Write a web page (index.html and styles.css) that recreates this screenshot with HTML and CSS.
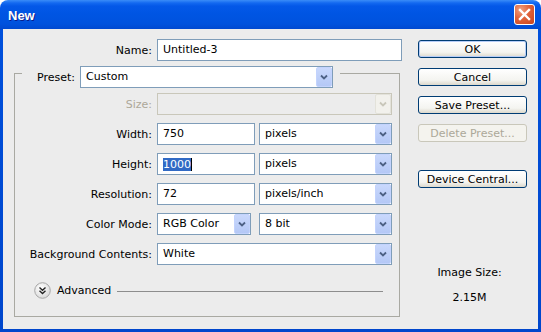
FILE: index.html
```html
<!DOCTYPE html>
<html lang="en">
<head>
  <meta charset="UTF-8" />
  <title>New</title>
  <link rel="stylesheet" href="styles.css">
</head>
<body>
  <div class="window">
    <div class="titlebar">
      <span class="title">New</span>
      <span class="close">
        <svg width="19" height="19" viewBox="0 0 19 19"><path d="M5 5 L14 14 M14 5 L5 14" stroke="#fff" stroke-width="2.4" stroke-linecap="square"/></svg>
      </span>
    </div>

    <div class="client">
      <div class="form">
        <div class="row name-row">
          <label>Name:</label>
          <div class="field">Untitled-3</div>
        </div>

        <div class="group">
          <div class="group-head">
            <span class="tick"></span>
            <label class="preset-label">Preset:</label>
            <div class="combo preset">
              <span class="val">Custom</span>
              <span class="arrow"><svg width="14" height="18" viewBox="0 0 14 18"><path d="M4 7.5 L7 10.5 L10 7.5" fill="none" stroke="#4d6185" stroke-width="1.8"/></svg></span>
            </div>
            <span class="head-rest"></span>
          </div>

          <div class="group-body">
            <div class="row">
              <label class="off">Size:</label>
              <div class="combo off">
                <span class="val"></span>
                <span class="arrow"><svg width="14" height="18" viewBox="0 0 14 18"><path d="M4 7.5 L7 10.5 L10 7.5" fill="none" stroke="#c9c7ba" stroke-width="1.8"/></svg></span>
              </div>
            </div>

            <div class="row">
              <label>Width:</label>
              <div class="pair">
                <div class="field">750</div>
                <div class="combo">
                  <span class="val">pixels</span>
                  <span class="arrow"><svg width="14" height="18" viewBox="0 0 14 18"><path d="M4 7.5 L7 10.5 L10 7.5" fill="none" stroke="#4d6185" stroke-width="1.8"/></svg></span>
                </div>
              </div>
            </div>

            <div class="row">
              <label>Height:</label>
              <div class="pair">
                <div class="field"><span class="sel">1000</span><span class="caret"></span></div>
                <div class="combo">
                  <span class="val">pixels</span>
                  <span class="arrow"><svg width="14" height="18" viewBox="0 0 14 18"><path d="M4 7.5 L7 10.5 L10 7.5" fill="none" stroke="#4d6185" stroke-width="1.8"/></svg></span>
                </div>
              </div>
            </div>

            <div class="row">
              <label>Resolution:</label>
              <div class="pair">
                <div class="field">72</div>
                <div class="combo">
                  <span class="val">pixels/inch</span>
                  <span class="arrow"><svg width="14" height="18" viewBox="0 0 14 18"><path d="M4 7.5 L7 10.5 L10 7.5" fill="none" stroke="#4d6185" stroke-width="1.8"/></svg></span>
                </div>
              </div>
            </div>

            <div class="row">
              <label>Color Mode:</label>
              <div class="pair mode">
                <div class="combo">
                  <span class="val">RGB Color</span>
                  <span class="arrow"><svg width="14" height="18" viewBox="0 0 14 18"><path d="M4 7.5 L7 10.5 L10 7.5" fill="none" stroke="#4d6185" stroke-width="1.8"/></svg></span>
                </div>
                <div class="combo">
                  <span class="val">8 bit</span>
                  <span class="arrow"><svg width="14" height="18" viewBox="0 0 14 18"><path d="M4 7.5 L7 10.5 L10 7.5" fill="none" stroke="#4d6185" stroke-width="1.8"/></svg></span>
                </div>
              </div>
            </div>

            <div class="row">
              <label>Background Contents:</label>
              <div class="combo">
                <span class="val">White</span>
                <span class="arrow"><svg width="14" height="18" viewBox="0 0 14 18"><path d="M4 7.5 L7 10.5 L10 7.5" fill="none" stroke="#4d6185" stroke-width="1.8"/></svg></span>
              </div>
            </div>

            <div class="advanced">
              <svg class="adv-btn" width="17" height="17" viewBox="0 0 17 17">
                <defs>
                  <radialGradient id="ab" cx="0.4" cy="0.35" r="0.7">
                    <stop offset="0" stop-color="#ffffff"/>
                    <stop offset="1" stop-color="#d8d8d8"/>
                  </radialGradient>
                </defs>
                <circle cx="8.5" cy="8.5" r="7.8" fill="url(#ab)" stroke="#a7a7a7"/>
                <path d="M5.5 5.5 L8.5 8.2 L11.5 5.5 M5.5 8.8 L8.5 11.5 L11.5 8.8" fill="none" stroke="#222" stroke-width="1.4"/>
              </svg>
              <span>Advanced</span>
              <span class="adv-line"></span>
            </div>
          </div>
        </div>
      </div>

      <div class="side">
        <button class="default">OK</button>
        <button>Cancel</button>
        <button>Save Preset...</button>
        <button disabled>Delete Preset...</button>
        <button class="device">Device Central...</button>
        <div class="image-size">
          <div>Image Size:</div>
          <div>2.15M</div>
        </div>
      </div>
    </div>
  </div>
</body>
</html>
```

FILE: styles.css
```css
html, body {
  margin: 0;
  background: #ffffff;
}
body {
  width: 541px;
  height: 332px;
  font-family: "DejaVu Sans", Tahoma, sans-serif;
  font-size: 11px;
  color: #000;
}
.window {
  height: 332px;
  box-sizing: border-box;
  padding: 0 3px 3px 3px;
  border-radius: 8px 8px 0 0;
  background: linear-gradient(#3a8cf8 0px, #1369f0 3px, #0458e8 6px, #0055e3 14px, #0052dd 24px, #0049d0 29px, #0050dc 30px, #0046cc 100%);
  display: flex;
  flex-direction: column;
}
.titlebar {
  height: 29px;
  display: flex;
  align-items: center;
  justify-content: space-between;
  padding: 0 3px 0 5px;
}
.title {
  font-family: "Liberation Sans", Arial, sans-serif;
  font-weight: bold;
  font-size: 13px;
  color: #fff;
  text-shadow: 1px 1px 0 #0a1e8c;
  margin-top: 1px;
}
.close {
  width: 19px;
  height: 19px;
  border: 1px solid #fff;
  border-radius: 3px;
  background: radial-gradient(circle at 30% 25%, #f0a07f 0, #e0633b 45%, #c8421c 100%);
  display: flex;
}
.client {
  flex: 1;
  background: #ececec;
  display: flex;
}

/* left column */
.form {
  width: 402px;
  padding-top: 10px;
}
.row {
  display: grid;
  grid-template-columns: 137px 235px;
  column-gap: 5px;
  align-items: center;
  height: 22px;
}
.row label {
  text-align: right;
  white-space: nowrap;
}
.name-row {
  grid-template-columns: 149px 245px;
}
.field, .combo {
  box-sizing: border-box;
  height: 22px;
  border: 1px solid #7f9db9;
  background: #fff;
  line-height: 20px;
  white-space: nowrap;
}
.field {
  padding-left: 5px;
  display: flex;
  align-items: center;
}
.combo {
  display: flex;
}
.combo .val {
  flex: 1;
  padding-left: 5px;
}
.arrow {
  box-sizing: border-box;
  width: 16px;
  height: 20px;
  border: 1px solid #c3d3fd;
  border-radius: 2px;
  background: linear-gradient(#c9d8fc, #b4c8f6);
  display: flex;
  justify-content: center;
  align-items: center;
}
.combo.off {
  background: #ececec;
  border-color: #c9c7ba;
}
.combo.off .arrow {
  background: #f2f1ec;
  border-color: #e3e2da;
}
label.off {
  color: #aca899;
}
.sel {
  background: #316ac5;
  color: #fff;
  line-height: 13px;
}
.caret {
  width: 1px;
  height: 13px;
  background: #000;
}
.pair {
  display: grid;
  grid-template-columns: 98px 133px;
  column-gap: 4px;
}
.pair.mode {
  grid-template-columns: 94px 133px;
  column-gap: 8px;
}

/* group box */
.group {
  width: 386px;
  margin: 5px 0 0 11px;
}
.group-head {
  display: flex;
  height: 22px;
  align-items: center;
}
.tick, .head-rest {
  align-self: stretch;
  margin-top: 7px;
  border-top: 1px solid #a9a9a2;
}
.tick {
  width: 7px;
  border-left: 1px solid #a9a9a2;
}
.preset-label {
  width: 53px;
  text-align: right;
  margin-right: 5px;
}
.combo.preset {
  width: 253px;
}
.head-rest {
  flex: 1;
  margin-left: 7px;
  border-right: 1px solid #a9a9a2;
}
.group-body {
  border: 1px solid #a9a9a2;
  border-top: none;
  padding: 5px 0 17px 0;
  display: flex;
  flex-direction: column;
  gap: 8px;
}
.advanced {
  display: flex;
  align-items: center;
  height: 17px;
  margin-top: 9px;
  padding: 0 16px 0 19px;
  gap: 6px;
}
.adv-line {
  flex: 1;
  border-top: 1px solid #8d8d8d;
  margin-top: 2px;
}

/* right column */
.side {
  margin-left: 13px;
  padding-top: 11px;
  width: 109px;
  display: flex;
  flex-direction: column;
  gap: 10px;
}
button {
  box-sizing: border-box;
  height: 18px;
  padding: 0;
  font-family: "DejaVu Sans", Tahoma, sans-serif;
  font-size: 11px;
  color: #000;
  border: 1px solid #003c74;
  border-radius: 3px;
  background: linear-gradient(#ffffff, #f4f4f0 70%, #dcd8cc);
}
button.default {
  box-shadow: inset 0 0 0 1px #b6cdf7;
}
button:disabled {
  color: #aca899;
  border-color: #c9c7ba;
  background: #f4f3ee;
}
button.device {
  margin-top: 18px;
}
.image-size {
  margin-top: 68px;
  display: flex;
  flex-direction: column;
  align-items: center;
  gap: 12px;
  padding-right: 6px;
}
```
